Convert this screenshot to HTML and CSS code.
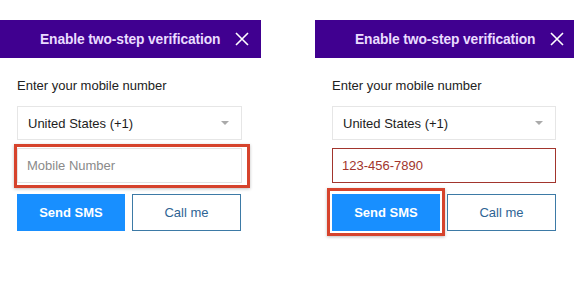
FILE: index.html
```html
<!DOCTYPE html>
<html>
<head>
<meta charset="utf-8">
<link rel="stylesheet" href="styles.css">
</head>
<body>
<div class="stage">
  <section class="panel panel-left">
    <header class="head">
      <span class="title">Enable two-step verification</span>
      <svg class="close" viewBox="0 0 14 14" width="14" height="14"><path d="M1 1L13 13M13 1L1 13" stroke="#ffffff" stroke-width="1.6" fill="none"/></svg>
    </header>
    <div class="body">
      <div class="label">Enter your mobile number</div>
      <div class="select"><span>United States (+1)</span><span class="caret"></span></div>
      <div class="field-wrap">
        <div class="field placeholder">Mobile Number</div>
        <div class="mark mark-field"></div>
      </div>
      <div class="actions">
        <div class="btn-wrap"><button class="btn btn-primary">Send SMS</button></div>
        <button class="btn btn-secondary">Call me</button>
      </div>
    </div>
  </section>
  <section class="panel panel-right">
    <header class="head">
      <span class="title">Enable two-step verification</span>
      <svg class="close" viewBox="0 0 14 14" width="14" height="14"><path d="M1 1L13 13M13 1L1 13" stroke="#ffffff" stroke-width="1.6" fill="none"/></svg>
    </header>
    <div class="body">
      <div class="label">Enter your mobile number</div>
      <div class="select"><span>United States (+1)</span><span class="caret"></span></div>
      <div class="field-wrap">
        <div class="field filled">123-456-7890</div>
      </div>
      <div class="actions">
        <div class="btn-wrap"><button class="btn btn-primary">Send SMS</button><div class="mark mark-btn"></div></div>
        <button class="btn btn-secondary">Call me</button>
      </div>
    </div>
  </section>
</div>
</body>
</html>
```

FILE: styles.css
```css
html, body {
  margin: 0;
  padding: 0;
  background: #ffffff;
  overflow: hidden;
}
body {
  font-family: "Liberation Sans", Arial, sans-serif;
  color: #1d1d1d;
}
.stage {
  display: flex;
  gap: 54px;
  padding-top: 20px;
  padding-bottom: 40px;
  width: 574px;
  overflow: hidden;
}
.panel {
  flex: none;
}
.panel-left { width: 261px; }
.panel-right { width: 259px; }
.head {
  height: 38px;
  background: #400090;
  display: flex;
  align-items: center;
  padding-left: 40px;
  box-sizing: border-box;
}
.title {
  color: #eadcff;
  font-weight: bold;
  font-size: 13.8px;
  letter-spacing: -0.1px;
}
.close {
  margin-left: 15px;
}
.body {
  padding: 0 0 0 17px;
}
.panel-left .body { width: 225px; }
.panel-right .body { width: 224px; }
.label {
  margin-top: 20px;
  font-size: 13px;
  line-height: 16px;
  color: #222;
}
.select {
  margin-top: 12px;
  height: 34px;
  border: 1px solid #e6e6e6;
  box-sizing: border-box;
  display: flex;
  align-items: center;
  justify-content: space-between;
  padding: 0 12px 0 10px;
  font-size: 13px;
  color: #1d1d1d;
}
.caret {
  width: 0;
  height: 0;
  border-left: 4px solid transparent;
  border-right: 4px solid transparent;
  border-top: 4px solid #aaa;
}
.field-wrap {
  position: relative;
  margin-top: 8px;
}
.field {
  height: 35px;
  box-sizing: border-box;
  display: flex;
  align-items: center;
  padding-left: 9px;
  font-size: 13px;
}
.placeholder {
  border: 1px solid #e3e3e3;
  color: #8a8a8a;
}
.filled {
  border: 1px solid #a2352d;
  color: #a2352d;
}
.mark {
  position: absolute;
  border: 3px solid #d6432c;
  box-shadow: 0 1px 3px rgba(0,0,0,0.25);
  pointer-events: none;
}
.mark-field {
  left: -3px;
  top: -4px;
  right: -8px;
  bottom: -5px;
}
.actions {
  margin-top: 11px;
  display: flex;
  gap: 7px;
}
.btn-wrap {
  position: relative;
  display: flex;
}
.btn {
  width: 108px;
  height: 37px;
  box-sizing: border-box;
  font-family: "Liberation Sans", Arial, sans-serif;
  font-size: 13px;
  padding: 0;
  cursor: pointer;
}
.btn-primary {
  background: #188fff;
  color: #ffffff;
  border: none;
  font-weight: bold;
}
.btn-secondary {
  background: #ffffff;
  color: #2e6494;
  border: 1px solid #3d7aa6;
  width: 109px;
}
.mark-btn {
  left: -5px;
  top: -6px;
  right: -5px;
  bottom: -5px;
}
```
